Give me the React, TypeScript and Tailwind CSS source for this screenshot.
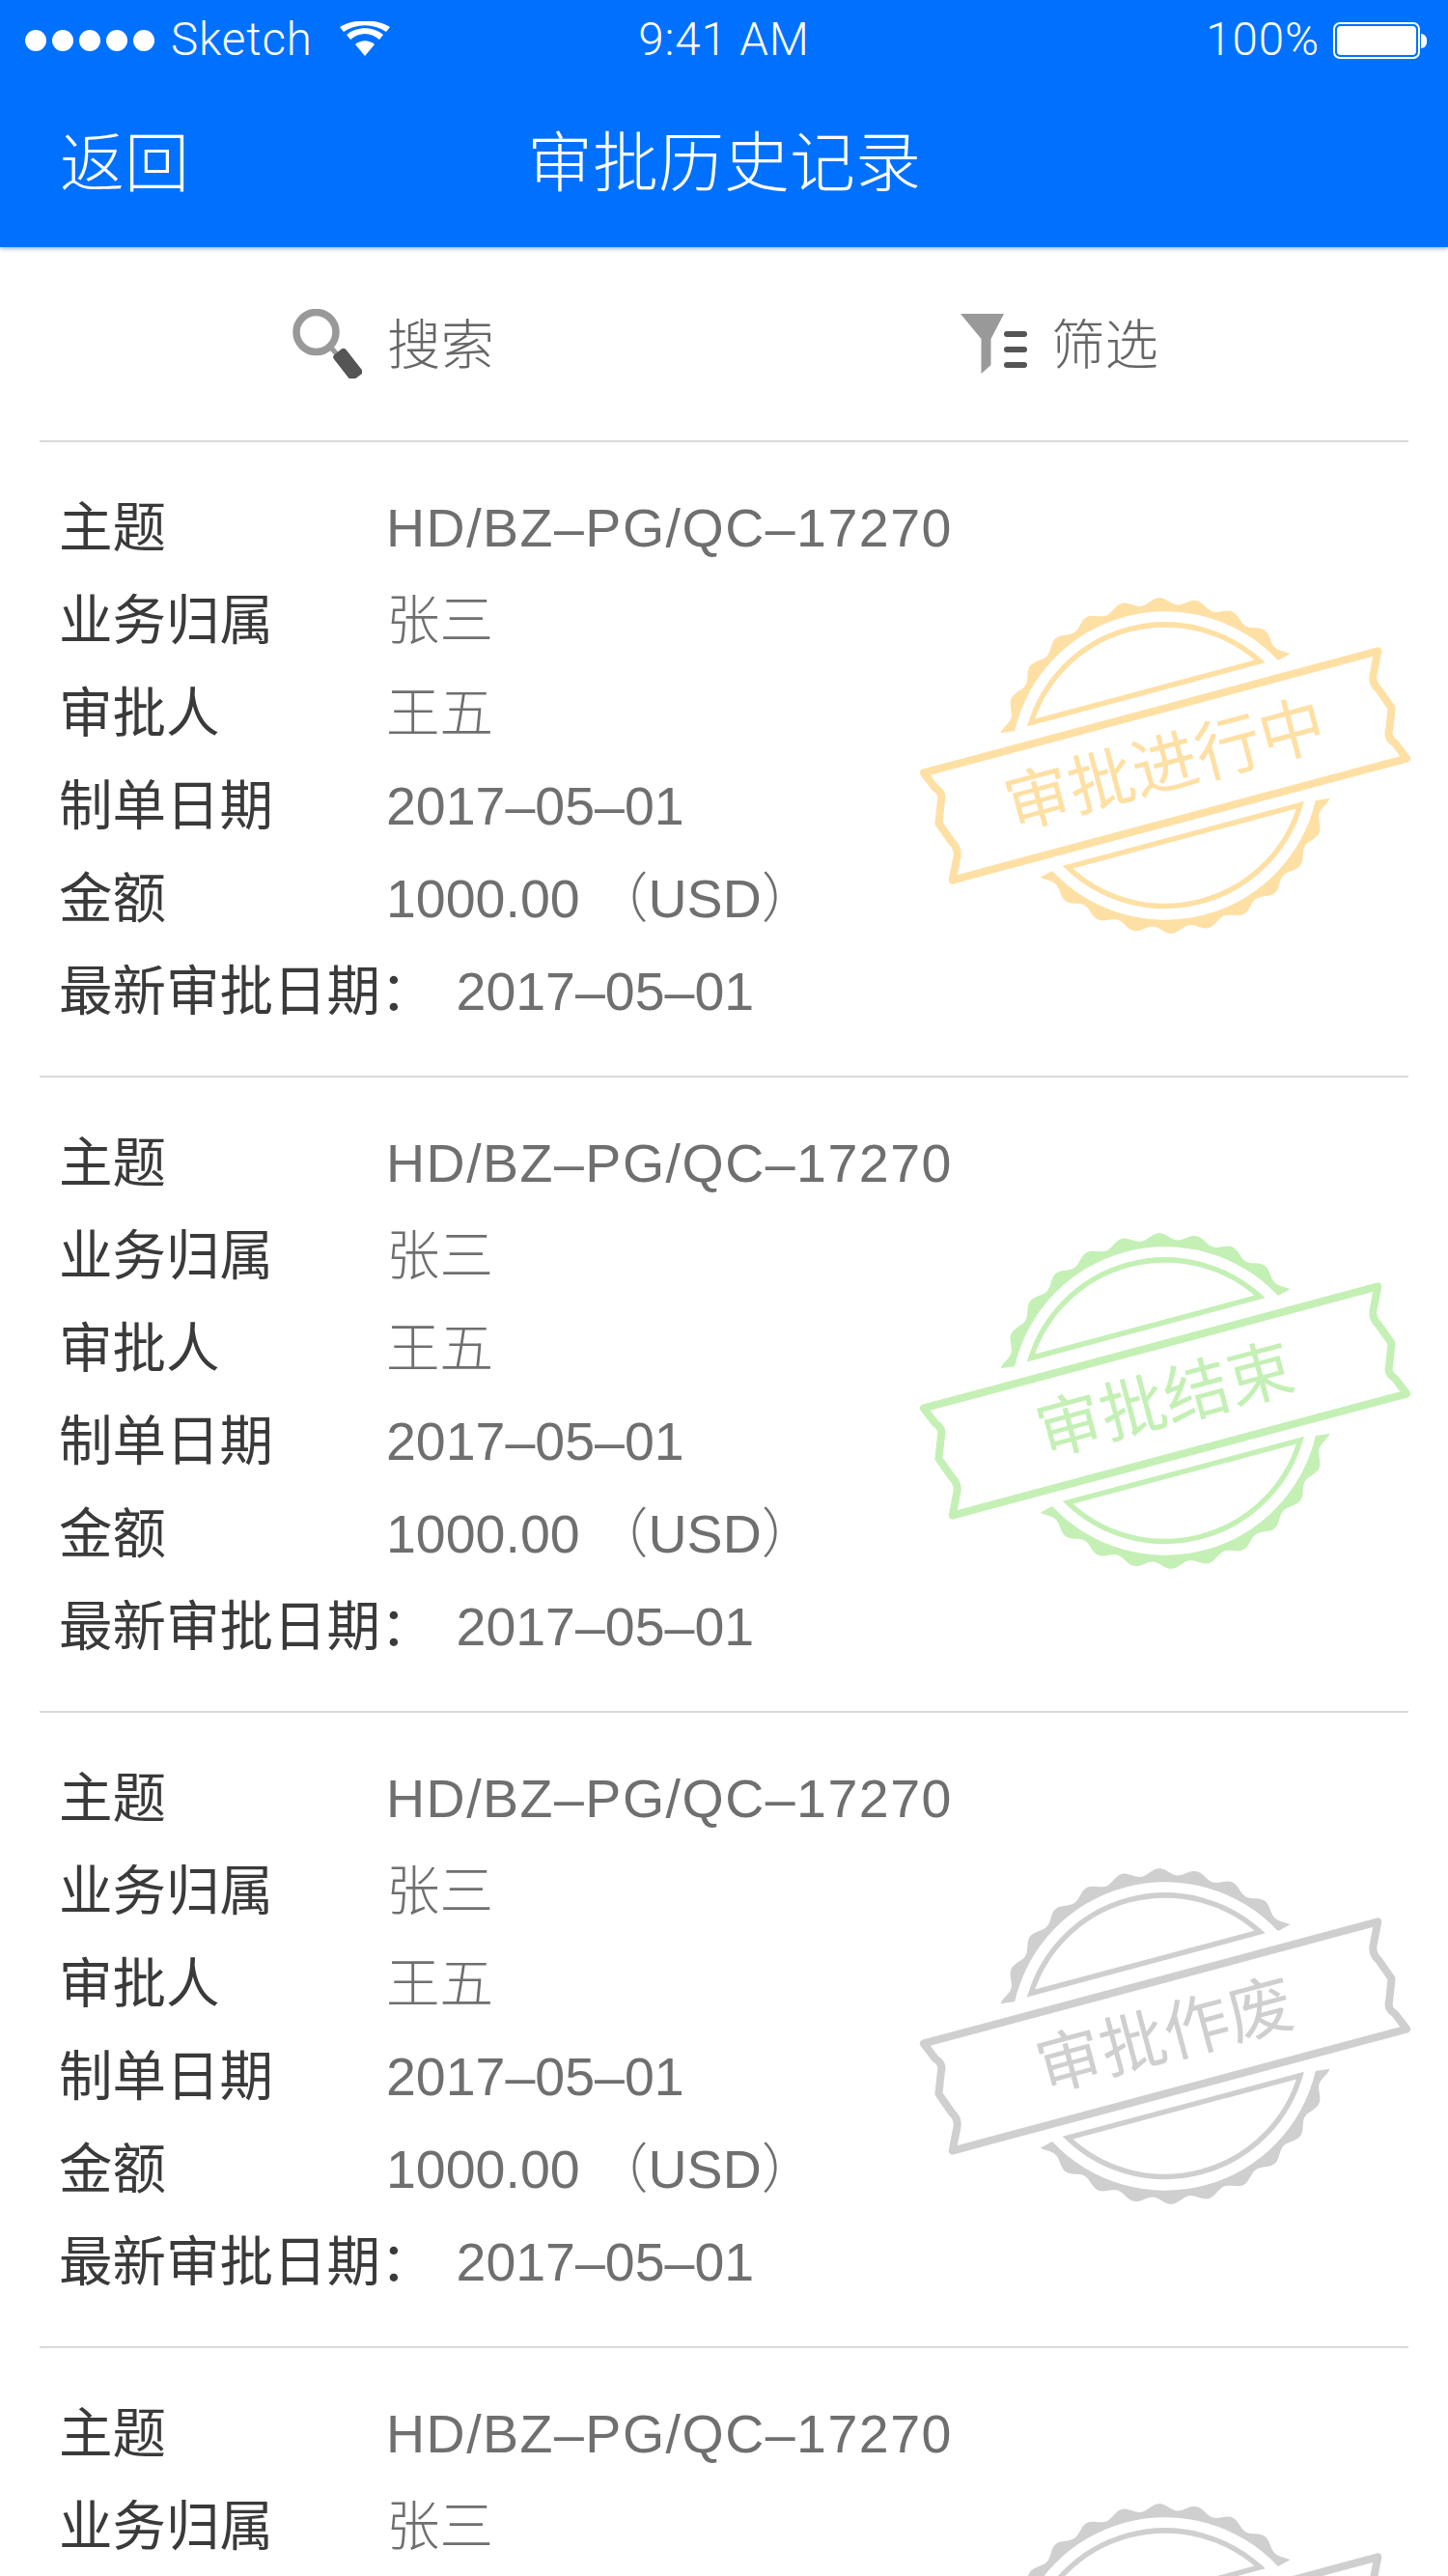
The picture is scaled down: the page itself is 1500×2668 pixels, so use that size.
const rows = [
  ['主题', 'HD/BZ–PG/QC–17270', 'tracking-[1.5px]'],
  ['业务归属', '张三', ''],
  ['审批人', '王五', ''],
  ['制单日期', '2017–05–01', ''],
  ['金额', '1000.00 （USD）', ''],
];

// scalloped outer edge of the stamp, upper half; the lower half is the same path turned 180deg
function scallopPath() {
  const points: string[] = [];
  for (let deg = -153.8; deg <= -26.2; deg += 1) {
    const rad = (deg * Math.PI) / 180;
    const r = 170.5 + 3.5 * Math.cos((deg + 90) * 28 * (Math.PI / 180));
    points.push(`${(r * Math.cos(rad)).toFixed(1)} ${(r * Math.sin(rad)).toFixed(1)}`);
  }
  return `M${points.join('L')}L141.2 -75A160 160 0 0 0 -141.2 -75Z`;
}

const scallop = scallopPath();

function Stamp({ label, color }: { label: string; color: string }) {
  return (
    <svg width="550" height="390" viewBox="0 0 550 390" className="absolute right-[-21px] top-[144px]">
      <g transform="translate(277 191) rotate(-15)">
        <path d={scallop} fill={color} />
        <path d={scallop} fill={color} transform="rotate(180)" />
        <path d="M-122.8 -79A146 146 0 0 1 122.8 -79Z" fill="none" stroke={color} strokeWidth="5.5" />
        <path d="M-124.6 75.5A146 146 0 0 0 124.6 75.5Z" fill="none" stroke={color} strokeWidth="5.5" />
        <path
          d="M-243.5 -57.5H243.5L234 -38Q228 -28 234 -19L242 3L234 24Q229 32 236 39L243.5 57.5H-243.5L-234 38Q-228 28 -234 19L-242 -3L-234 -24Q-229 -32 -236 -39Z"
          fill="none"
          stroke={color}
          strokeWidth="8"
          strokeLinejoin="round"
        />
        <text x="0" y="23" textAnchor="middle" fontSize="68" fontWeight="400" fill={color}>
          {label}
        </text>
      </g>
    </svg>
  );
}

function RecordCard({ label, color }: { label: string; color: string }) {
  return (
    <div className="relative h-[658px] border-t-2 border-[#d9d9d9] px-[20px] pt-[42px] font-['Liberation_Sans','Noto_Sans_CJK_SC',sans-serif]">
      {rows.map(([name, value, extra]) => (
        <div key={name} className="flex h-[96px] items-center">
          <span className="w-[339px] font-normal text-[#3a3a3a]">{name}</span>
          <span className={`text-[#6f6f6f] ${extra}`}>{value}</span>
        </div>
      ))}
      <div className="flex h-[96px] items-center">
        <span className="font-normal text-[#3a3a3a]">最新审批日期：</span>
        <span className="ml-[23px] text-[#6f6f6f]">2017–05–01</span>
      </div>
      <Stamp label={label} color={color} />
    </div>
  );
}

export default function App() {
  return (
    <div className="h-[2668px] w-[1500px] overflow-hidden bg-white font-['Roboto','Noto_Sans_CJK_SC',sans-serif] text-[55.5px] font-light">
      <header className="relative h-[256px] bg-[#0070ff] text-white shadow-[0_2px_4px_rgba(0,60,160,0.35)]">
        <div className="grid h-[84px] grid-cols-[1fr_auto_1fr] items-center text-[47.5px] tracking-[0.9px]">
          <div className="flex items-center pl-[26px]">
            <div className="flex gap-[6px]">
              <span className="h-[22px] w-[22px] rounded-full bg-white" />
              <span className="h-[22px] w-[22px] rounded-full bg-white" />
              <span className="h-[22px] w-[22px] rounded-full bg-white" />
              <span className="h-[22px] w-[22px] rounded-full bg-white" />
              <span className="h-[22px] w-[22px] rounded-full bg-white" />
            </div>
            <span className="ml-[17px]">Sketch</span>
            <svg width="52" height="36" viewBox="0 0 52 36" className="ml-[28px] -translate-y-[2px]">
              <path d="M26 36L16 24C22 19 30 19 36 24Z" fill="white" />
              <path d="M11 19L7 14C17 5 35 5 45 14L41 19C32 11 20 11 11 19Z" fill="white" />
              <path d="M4 11L0 6C14 -3 38 -3 52 6L48 11C35 2 17 2 4 11Z" fill="white" />
            </svg>
          </div>
          <span>9:41 AM</span>
          <div className="flex items-center justify-end pr-[22px]">
            <span>100%</span>
            <div className="ml-[14px] h-[38px] w-[90px] rounded-[7px] border-2 border-white p-[2px]">
              <div className="h-full w-full rounded-[4px] bg-white" />
            </div>
            <div className="ml-[1px] h-[15px] w-[6px] rounded-r-full bg-white" />
          </div>
        </div>
        <nav className="grid h-[172px] grid-cols-[1fr_auto_1fr] items-center text-[67px]">
          <span className="pl-[62px]">返回</span>
          <span className="text-[68px]">审批历史记录</span>
          <span />
        </nav>
      </header>

      <div className="flex h-[200px] items-center pl-[303px] text-[#666666]">
        <svg width="72" height="72" viewBox="0 0 72 72">
          <circle cx="24.5" cy="24" r="20.5" fill="none" stroke="#999999" strokeWidth="7.5" />
          <path d="M39 39L47 48" stroke="#999999" strokeWidth="5" />
          <rect x="49" y="41" width="16" height="33" rx="3.5" fill="#555555" transform="rotate(-38 57 57)" />
        </svg>
        <span className="ml-[26px] translate-y-[3px]">搜索</span>
        <svg width="70" height="62" viewBox="0 0 70 62" className="ml-[483px]">
          <path d="M0 0H45L31.5 26V53L21.5 62V26Z" fill="#999999" />
          <rect x="45" y="18" width="24" height="6" rx="3" fill="#555555" />
          <rect x="45" y="34" width="24" height="6" rx="3" fill="#555555" />
          <rect x="45" y="50" width="24" height="6" rx="3" fill="#555555" />
        </svg>
        <span className="ml-[24px] translate-y-[3px]">筛选</span>
      </div>

      <div className="mx-[41px]">
        <RecordCard label="审批进行中" color="#fee0a5" />
        <RecordCard label="审批结束" color="#c4f0b5" />
        <RecordCard label="审批作废" color="#cfcfcf" />
        <RecordCard label="审批作废" color="#cfcfcf" />
      </div>
    </div>
  );
}
